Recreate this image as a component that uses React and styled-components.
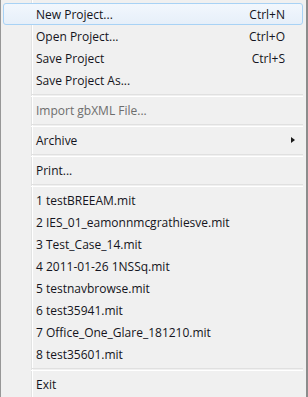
import React from 'react';
import styled, { createGlobalStyle } from 'styled-components';

const GlobalStyle = createGlobalStyle`
  html, body {
    margin: 0;
    padding: 0;
    background: #f0f0f0;
  }
`;

const Menu = styled.div`
  width: 308px;
  height: 397px;
  box-sizing: border-box;
  padding: 3px 3px 2px 2px;
  border-left: 1px solid #979797;
  border-right: 2px solid #8c8c8c;
  background:
    linear-gradient(
      to right,
      transparent 30px,
      #e2e3e3 30px,
      #e2e3e3 31px,
      #ffffff 31px,
      #ffffff 32px,
      transparent 32px
    ),
    #f0f0f0;
  font-family: "Open Sans", "Segoe UI", sans-serif;
  font-size: 12px;
  color: #141420;
  display: flex;
  flex-direction: column;
`;

const Item = styled.div`
  height: 22px;
  box-sizing: border-box;
  display: flex;
  align-items: center;
  padding: 0 17px 0 32px;
  border: 1px solid ${(p) => (p.$active ? '#a8d2f5' : 'transparent')};
  border-radius: 3px;
  background: ${(p) =>
    p.$active ? 'linear-gradient(to bottom, #f2f7fd, #e6eff9)' : 'transparent'};
  color: ${(p) => (p.$disabled ? '#6d6d6d' : 'inherit')};
  white-space: nowrap;
`;

const Label = styled.span`
  flex: 1;
`;

const Shortcut = styled.span`
  text-align: right;
`;

const Arrow = styled.span`
  width: 0;
  height: 0;
  margin-right: -10px;
  border-top: 3.5px solid transparent;
  border-bottom: 3.5px solid transparent;
  border-left: 4px solid #1a1a1a;
`;

const Separator = styled.div`
  height: 8px;
  display: flex;
  align-items: center;
  padding-left: 28px;

  &::before {
    content: '';
    flex: 1;
    height: 1px;
    border-top: 1px solid #e0e0e0;
    border-bottom: 1px solid #ffffff;
  }
`;

const recent = [
  '1 testBREEAM.mit',
  '2 IES_01_eamonnmcgrathiesve.mit',
  '3 Test_Case_14.mit',
  '4 2011-01-26 1NSSq.mit',
  '5 testnavbrowse.mit',
  '6 test35941.mit',
  '7 Office_One_Glare_181210.mit',
  '8 test35601.mit',
];

const App = () => (
  <>
    <GlobalStyle />
    <Menu>
      <Item $active>
        <Label>New Project...</Label>
        <Shortcut>Ctrl+N</Shortcut>
      </Item>
      <Item>
        <Label>Open Project...</Label>
        <Shortcut>Ctrl+O</Shortcut>
      </Item>
      <Item>
        <Label>Save Project</Label>
        <Shortcut>Ctrl+S</Shortcut>
      </Item>
      <Item>
        <Label>Save Project As...</Label>
      </Item>
      <Separator />
      <Item $disabled>
        <Label>Import gbXML File...</Label>
      </Item>
      <Separator />
      <Item>
        <Label>Archive</Label>
        <Arrow />
      </Item>
      <Separator />
      <Item>
        <Label>Print...</Label>
      </Item>
      <Separator />
      {recent.map((name) => (
        <Item key={name}>
          <Label>{name}</Label>
        </Item>
      ))}
      <Separator />
      <Item>
        <Label>Exit</Label>
      </Item>
    </Menu>
  </>
);

export default App;
